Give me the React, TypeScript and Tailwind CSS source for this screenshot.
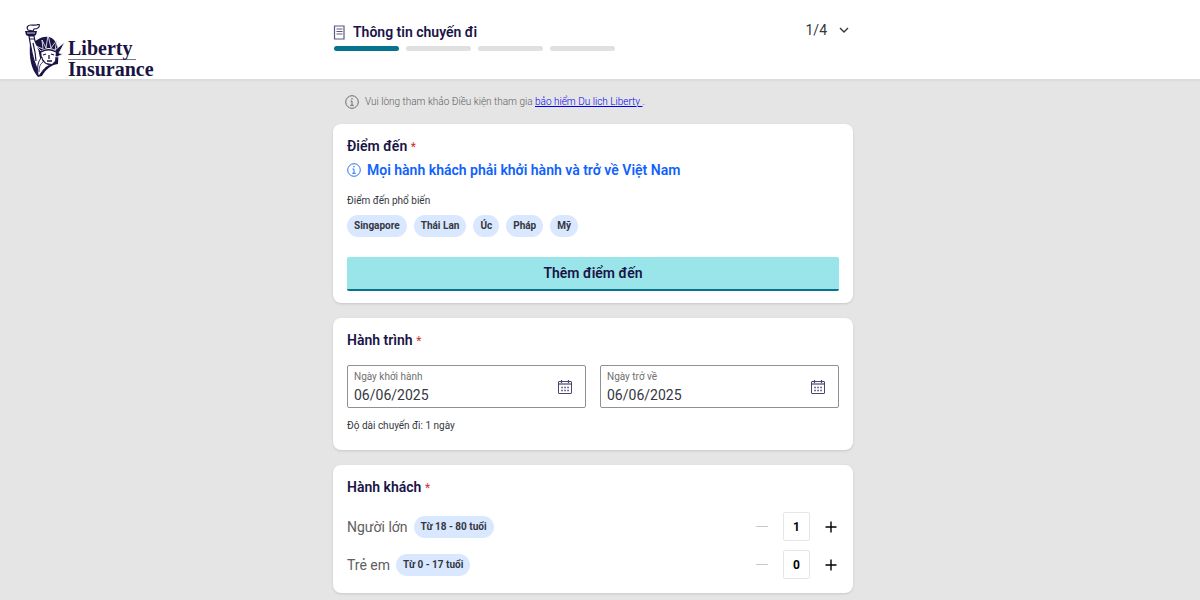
import { useState } from "react";
import type { ReactNode } from "react";

const steps = ["Thông tin chuyến đi", "Gói bảo hiểm", "Thông tin hành khách", "Thanh toán"];
const destinations = ["Singapore", "Thái Lan", "Úc", "Pháp", "Mỹ"];

const Logo = () => (
  <a href="#home" className="flex items-end text-[#1a1446]">
    <svg viewBox="0 0 40 54" className="h-[54px] w-10 shrink-0" fill="currentColor" aria-hidden="true">
      {/* Shield behind the figure */}
      <path d="M13 16c6-4 12-4 16-1 5 4 6 12 5 25-7 1-12 5-16 12l-4 1C7 45 5 34 6 20z" />
      {/* Torch */}
      <path d="M4 6C2 3 4 1 7 1c2 0 5 1 8-1 1 3-1 5-5 5l-1 2z" fill="#fff" stroke="currentColor" strokeWidth="1.2" />
      <path d="M1 7h12l-1 4-2 1H4l-2-1z" />
      <path d="M3 9h8" stroke="#fff" strokeWidth="0.8" />
      {/* Raised arm */}
      <path d="M5 12h5l1 5 4 9 2 10-3 10c-5-8-6-17-8-28z" fill="#fff" stroke="currentColor" strokeWidth="1.2" />
      <path d="M6 15h4M9 19l2 9 1 9" fill="none" stroke="currentColor" strokeWidth="1.2" />
      {/* Crown rays */}
      <path
        d="M18 28l-6-6 7 3-1-9 4 8 2-13 3 13 6-8-2 10 10-8-6 11 4 1-6 3z"
        stroke="#fff"
        strokeWidth="0.8"
      />
      {/* Face and crown band */}
      <path d="M17 27c5-4 11-4 15 0l-1 10-3 3-6-1-4-5z" fill="#fff" />
      <path d="M17 28c5-3 10-3 15 0M19 31l3-1m5 0l3 1M25 31v4M23 37h5" fill="none" stroke="currentColor" strokeWidth="1.3" />
      {/* Robe folds */}
      <path d="M14 51c-1-9 0-14 4-18 0 5 3 7 9 8-5 1-8 5-12 11z" fill="#fff" stroke="currentColor" strokeWidth="1" />
      <path d="M15 48c0-5 1-8 4-10" fill="none" stroke="currentColor" strokeWidth="0.8" />
    </svg>
    <span className="ml-1 font-['Liberation_Serif',serif] text-xl font-bold">
      <span className="block w-[68px] border-b border-[#1a1446]/60 leading-[22px]">Liberty</span>
      <span className="block leading-[18px]">Insurance</span>
    </span>
  </a>
);

const DocumentIcon = () => (
  <svg viewBox="0 0 12 15" className="h-[15px] w-3" fill="none" stroke="#5d5882" aria-hidden="true">
    <path d="M1.500 1h9.500v13H1.500z" strokeWidth="1.200" />
    <path d="M3.500 4h6M3.500 6.500h6M3.500 9h6" strokeWidth="1" />
  </svg>
);

const InfoIcon = () => (
  <svg viewBox="0 0 14 14" className="size-3.5" fill="none" stroke="currentColor" aria-hidden="true">
    <circle cx="7" cy="7" r="6.300" strokeWidth="0.900" />
    <path d="M5.500 6H7v4.200M5.200 10.300h3.600" strokeWidth="0.900" />
    <circle cx="7" cy="3.800" r="0.700" fill="currentColor" stroke="none" />
  </svg>
);

const CalendarIcon = () => (
  <svg viewBox="0 0 16 16" className="size-4" fill="none" stroke="#4a4570" aria-hidden="true">
    <rect x="1.500" y="2.500" width="13" height="12" rx="0.500" />
    <path d="M1.500 5h13" strokeWidth="1.200" />
    <path d="M4.500 1v3M11.500 1v3" strokeWidth="1.200" />
    <path d="M4.300 8.500h8M4.300 11.500h8" strokeWidth="1.400" strokeDasharray="1.500 1.500" />
  </svg>
);

const Card = ({ title, children }: { title: string; children: ReactNode }) => (
  <section className="rounded-lg bg-white px-3.5 shadow-sm">
    <h2 className="pt-3 text-sm/5 font-semibold text-[#1a1446]">
      {title} <span className="text-xs font-normal text-[#d32f2f]">*</span>
    </h2>
    {children}
  </section>
);

const DateField = ({ id, label }: { id: string; label: string }) => {
  const [value, setValue] = useState("06/06/2025");

  return (
    <div className="flex h-[43px] min-w-0 flex-1 items-center rounded-xs border border-[#919191] pr-3 pl-1.5">
      <div className="min-w-0 flex-1">
        <label htmlFor={id} className="block text-[10px]/4 text-[#707070]">
          {label}
        </label>
        <input
          id={id}
          value={value}
          onChange={(e) => setValue(e.target.value)}
          className="block w-full text-sm/5 text-[#343741] outline-none"
        />
      </div>
      <button type="button" aria-label={label} className="cursor-pointer">
        <CalendarIcon />
      </button>
    </div>
  );
};

const PassengerRow = ({ id, label, range, initial }: { id: string; label: string; range: string; initial: number }) => {
  const [count, setCount] = useState(initial);

  return (
    <div className="flex items-center">
      <label htmlFor={id} className="text-sm text-[#606060]">
        {label}
      </label>
      <span className="ml-1.5 rounded-full bg-[#d9e8ff] px-[7px] text-[10px]/[22px] font-bold text-[#343741]">{range}</span>
      <div className="ml-auto flex items-center gap-3.5 pr-px">
        <button
          type="button"
          aria-label={`Giảm ${label}`}
          onClick={() => setCount(Math.max(initial, count - 1))}
          className="flex size-3.5 items-center justify-center"
        >
          <span className="h-px w-3 bg-[#c8c8c8]" />
        </button>
        <input
          id={id}
          value={count}
          readOnly
          className="h-[29px] w-[27px] rounded-xs border border-[#e6e6e6] text-center text-xs font-bold text-black outline-none"
        />
        <button type="button" aria-label={`Thêm ${label}`} onClick={() => setCount(count + 1)} className="size-3.5">
          <svg viewBox="0 0 14 14" className="size-3.5" stroke="#000" strokeWidth="1.400" aria-hidden="true">
            <path d="M1.500 7h11M7 1.500v11" />
          </svg>
        </button>
      </div>
    </div>
  );
};

export default function App() {
  return (
    <div className="min-h-screen bg-[#e5e5e5] font-[Roboto,sans-serif]">
      <header className="grid grid-cols-[1fr_minmax(0,520px)_1fr] border-b border-[#dcdcdc] bg-white pr-3.5 shadow-xs">
        <div className="pt-6 pb-px pl-6">
          <Logo />
        </div>
        <div className="flex items-start justify-between pt-[22px]">
          <div>
            <h1 className="flex items-center gap-2 text-sm/5 font-semibold text-[#1a1446]">
              <DocumentIcon />
              {steps[0]}
            </h1>
            <ol className="mt-1 ml-px flex gap-[7px]">
              {steps.map((step, i) => (
                <li
                  key={step}
                  aria-label={step}
                  className={`h-[5px] w-[65px] rounded-full ${i === 0 ? "bg-[#06748c]" : "bg-[#e0e0e0]"}`}
                />
              ))}
            </ol>
          </div>
          <button type="button" className="mr-1 flex items-center gap-3 text-sm/4 text-[#343741]">
            1/4
            <svg viewBox="0 0 10 6" className="h-1.5 w-2.5" fill="none" stroke="currentColor" strokeWidth="1.400" aria-hidden="true">
              <path d="M1 1l4 4 4-4" />
            </svg>
          </button>
        </div>
      </header>

      <main className="pr-3.5">
        <div className="mx-auto flex max-w-[520px] flex-col gap-[15px] pt-3.5 pb-2">
          <p className="-mb-px flex items-center gap-1.5 px-3 text-[10px]/4 font-light text-[#606060]">
            <InfoIcon />
            <span>
              Vui lòng tham khảo Điều kiện tham gia{" "}
              <a href="#terms" className="text-[#0000ee] underline">
                bảo hiểm Du lịch Liberty&nbsp;
              </a>
              .
            </span>
          </p>

          <Card title="Điểm đến">
            <p className="mt-1 flex items-center gap-1.5 text-sm/5 font-semibold text-[#0f62fe]">
              <InfoIcon />
              Mọi hành khách phải khởi hành và trở về Việt Nam
            </p>
            <p className="mt-[13px] text-[10px]/4 text-[#343741]">Điểm đến phổ biến</p>
            <div className="mt-1.5 flex flex-wrap gap-[7px]">
              {destinations.map((name) => (
                <button
                  key={name}
                  type="button"
                  className="cursor-pointer rounded-full bg-[#d9e8ff] px-[7px] text-[10px]/[22px] font-bold text-[#343741]"
                >
                  {name}
                </button>
              ))}
            </div>
            <button
              type="button"
              className="mt-5 mb-3 w-full cursor-pointer rounded-xs border-b-2 border-[#06748c] bg-[#99e5ea] text-sm/8 font-semibold text-[#1a1446]"
            >
              Thêm điểm đến
            </button>
          </Card>

          <Card title="Hành trình">
            <div className="mt-[15px] flex gap-3.5">
              <DateField id="departure" label="Ngày khởi hành" />
              <DateField id="return" label="Ngày trở về" />
            </div>
            <p className="mt-2.5 pb-4 text-[10px]/4 text-[#343741]">Độ dài chuyến đi: 1 ngày</p>
          </Card>

          <Card title="Hành khách">
            <div className="mt-[15px] flex flex-col gap-[9px] pb-3.5">
              <PassengerRow id="adults" label="Người lớn" range="Từ 18 - 80 tuổi" initial={1} />
              <PassengerRow id="children" label="Trẻ em" range="Từ 0 - 17 tuổi" initial={0} />
            </div>
          </Card>
        </div>
      </main>
    </div>
  );
}
